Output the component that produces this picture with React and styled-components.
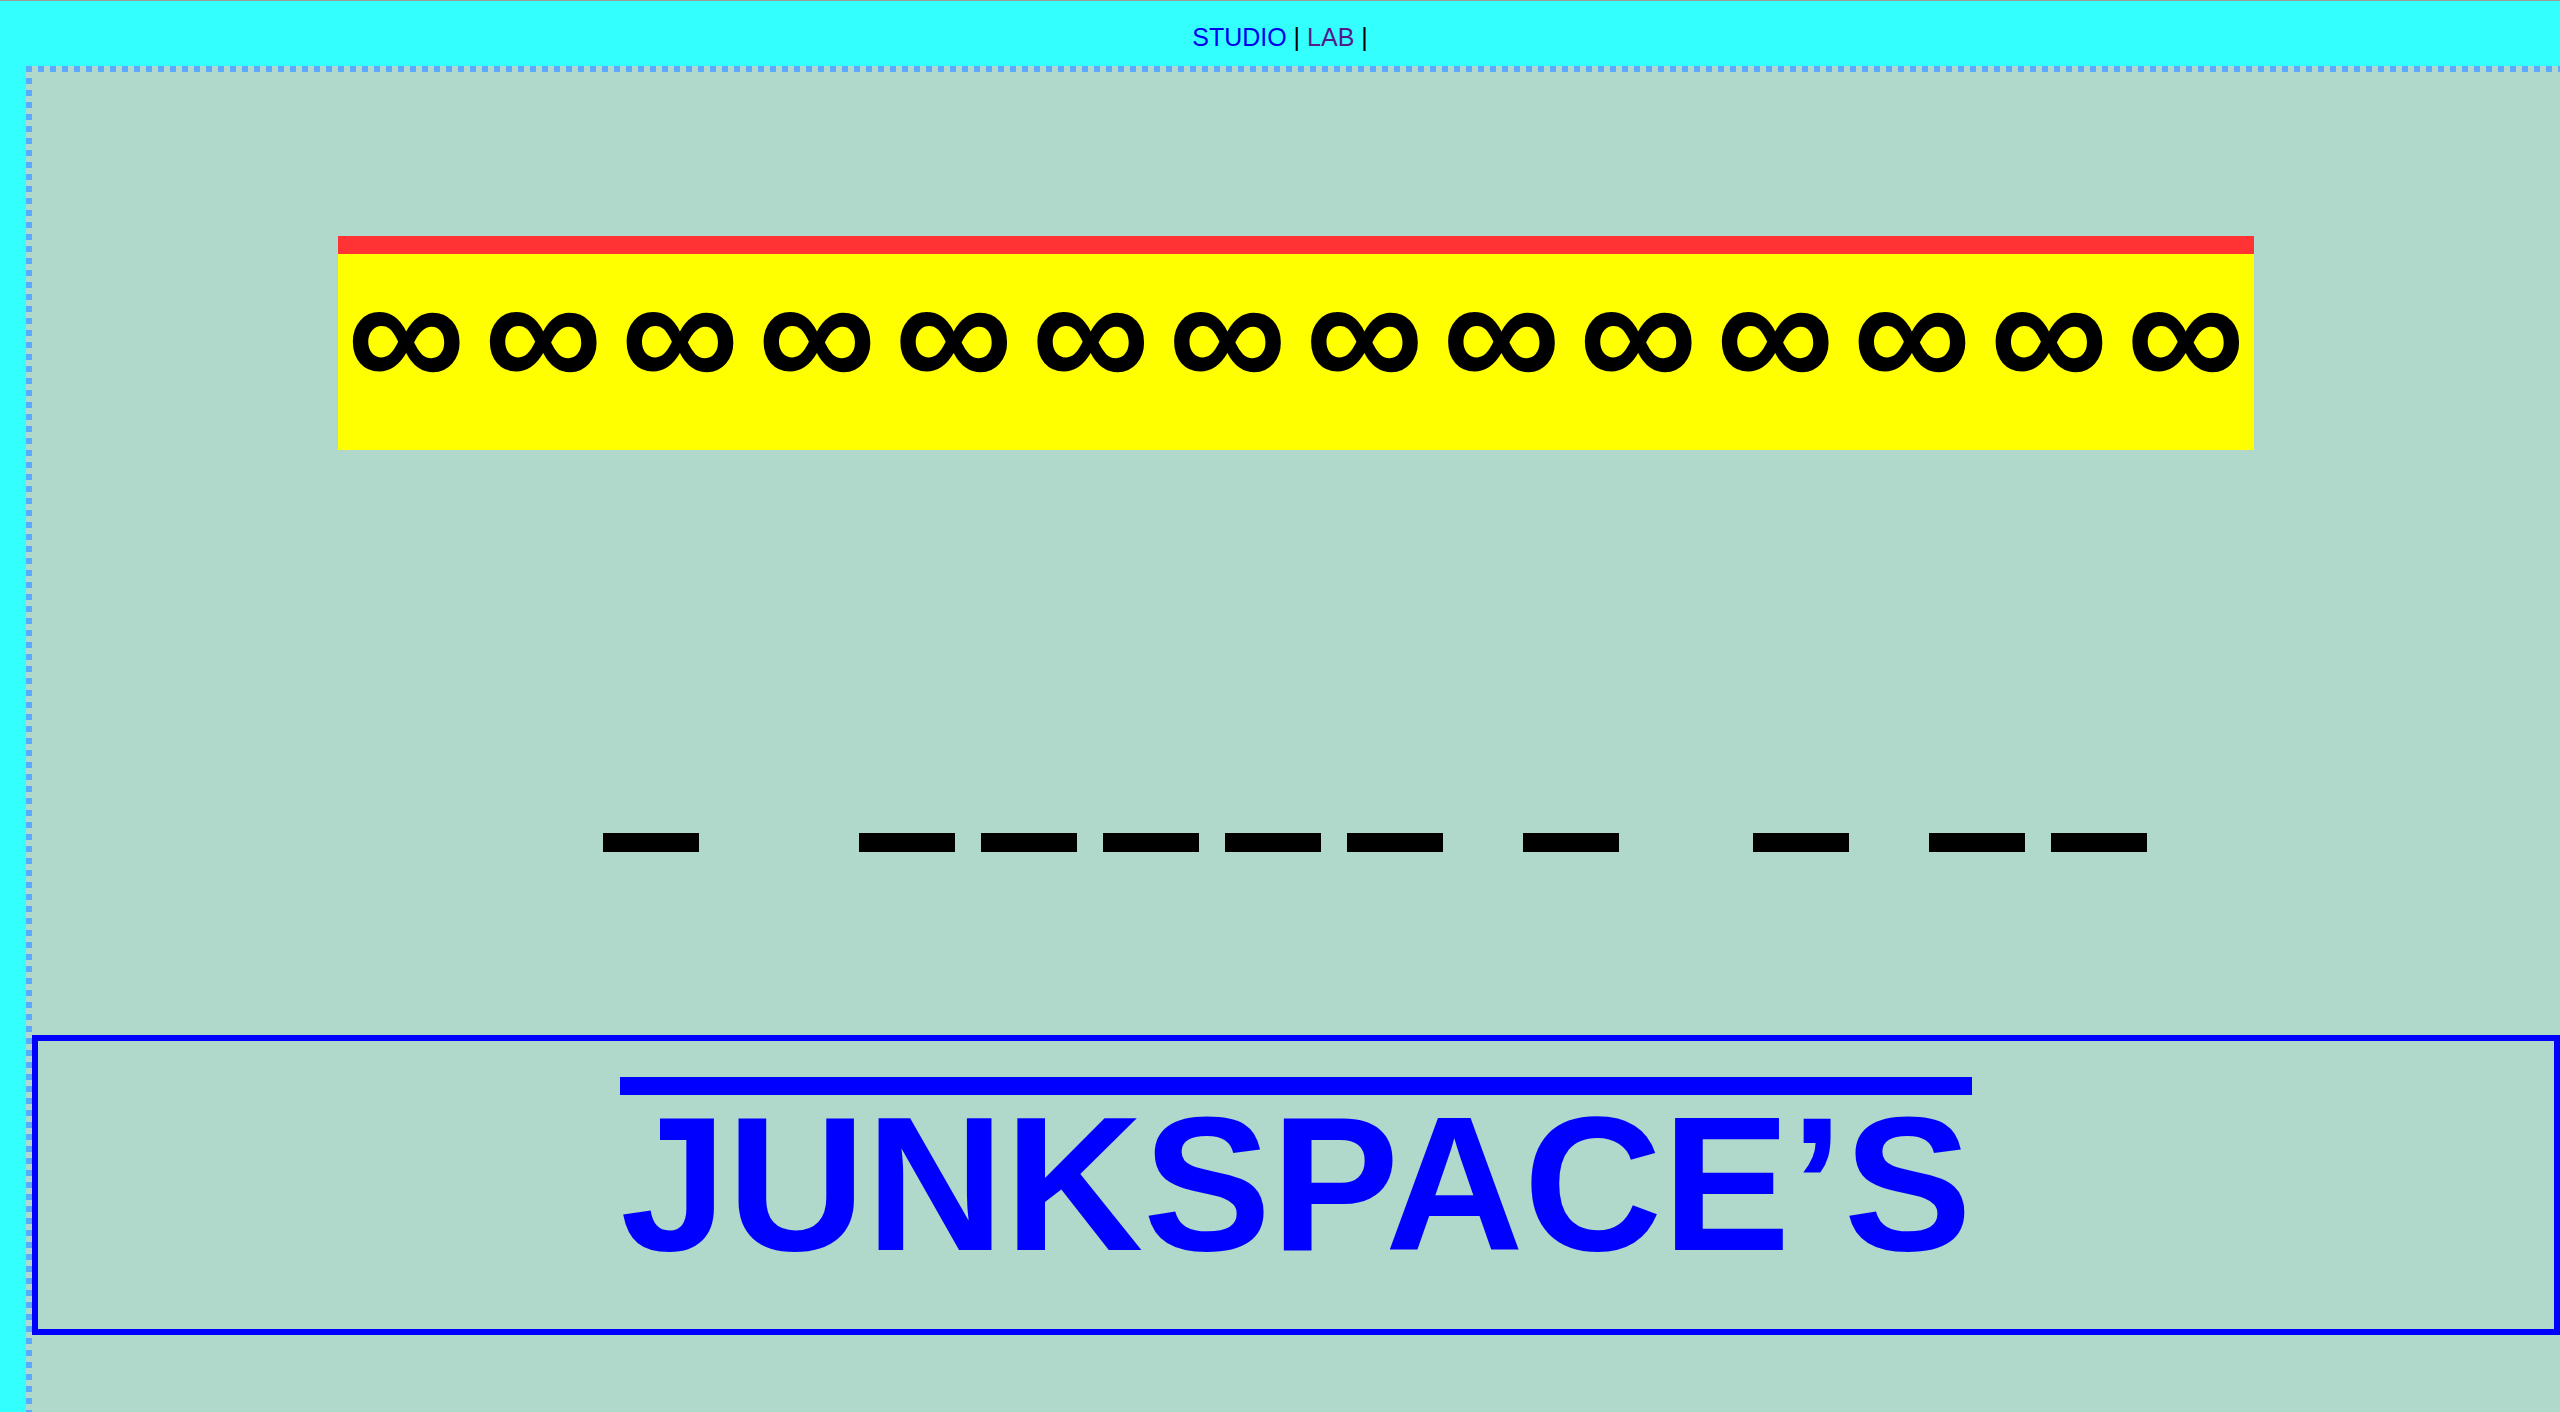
import React from "react";
import styled, { createGlobalStyle } from "styled-components";

const GlobalStyle = createGlobalStyle`
  html, body {
    margin: 0;
    padding: 0;
    background: #33ffff;
    overflow: hidden;
  }
  body {
    font-family: "Liberation Sans", Arial, sans-serif;
  }
`;

const Page = styled.div`
  min-height: 100vh;
  border-top: 1px solid #9a9a9a;
  box-sizing: border-box;
`;

const TopNav = styled.nav`
  height: 65px;
  box-sizing: border-box;
  padding-top: 22px;
  text-align: center;
  font-size: 25px;
  color: #000;
`;

const NavLink = styled.a`
  color: ${(p) => (p.$visited ? "#551a8b" : "#0000ee")};
  text-decoration: none;
`;

const Stage = styled.div`
  padding-left: 26px;
`;

const Panel = styled.main`
  min-height: calc(100vh - 66px);
  box-sizing: border-box;
  padding: 6px 0 0 6px;
  background:
    repeating-linear-gradient(to right, #5aabff 0 6px, transparent 6px 12px) top left / 100% 6px no-repeat,
    repeating-linear-gradient(to bottom, #5aabff 0 6px, transparent 6px 12px) top left / 6px 100% no-repeat,
    #b0d8cb;
`;

const Banner = styled.div`
  width: 1916px;
  margin: 164px auto 0;
  height: 214px;
  box-sizing: border-box;
  border-top: 18px solid #ff3333;
  background: #ffff00;
  display: flex;
  justify-content: space-between;
  align-items: center;
  padding: 0 9px 38px;
`;

const Infinity = styled.span`
  font-family: "Liberation Sans", Arial, sans-serif;
  font-weight: 700;
  font-size: 166px;
  line-height: 1;
  color: #000;
`;

const Blanks = styled.div`
  display: flex;
  margin-top: 383px;
  padding-left: 571px;
  height: 19px;
`;

const Blank = styled.span`
  width: 96px;
  height: 19px;
  background: #000;
  margin-left: ${(p) => p.$gap || 0}px;
`;

const TitleBox = styled.section`
  margin-top: 183px;
  border: 6px solid #0000ff;
  box-sizing: border-box;
  padding: 36px 0 56px;
  text-align: center;
`;

const Title = styled.h1`
  display: inline-block;
  margin: 0;
  border-top: 18px solid #0000ff;
  font-family: "Liberation Sans", Arial, sans-serif;
  font-weight: 700;
  font-size: 192px;
  line-height: 178px;
  color: #0000ff;
`;

const gaps = [0, 160, 26, 26, 26, 26, 80, 134, 80, 26];

export default function App() {
  return (
    <Page>
      <GlobalStyle />
      <TopNav>
        <NavLink href="#studio">STUDIO</NavLink> | <NavLink href="#lab" $visited>LAB</NavLink> |
      </TopNav>
      <Stage>
        <Panel>
          <Banner>
            {Array.from({ length: 14 }).map((_, i) => (
              <Infinity key={i}>∞</Infinity>
            ))}
          </Banner>
          <Blanks>
            {gaps.map((g, i) => (
              <Blank key={i} $gap={g} />
            ))}
          </Blanks>
          <TitleBox>
            <Title>JUNKSPACE’S</Title>
          </TitleBox>
        </Panel>
      </Stage>
    </Page>
  );
}
